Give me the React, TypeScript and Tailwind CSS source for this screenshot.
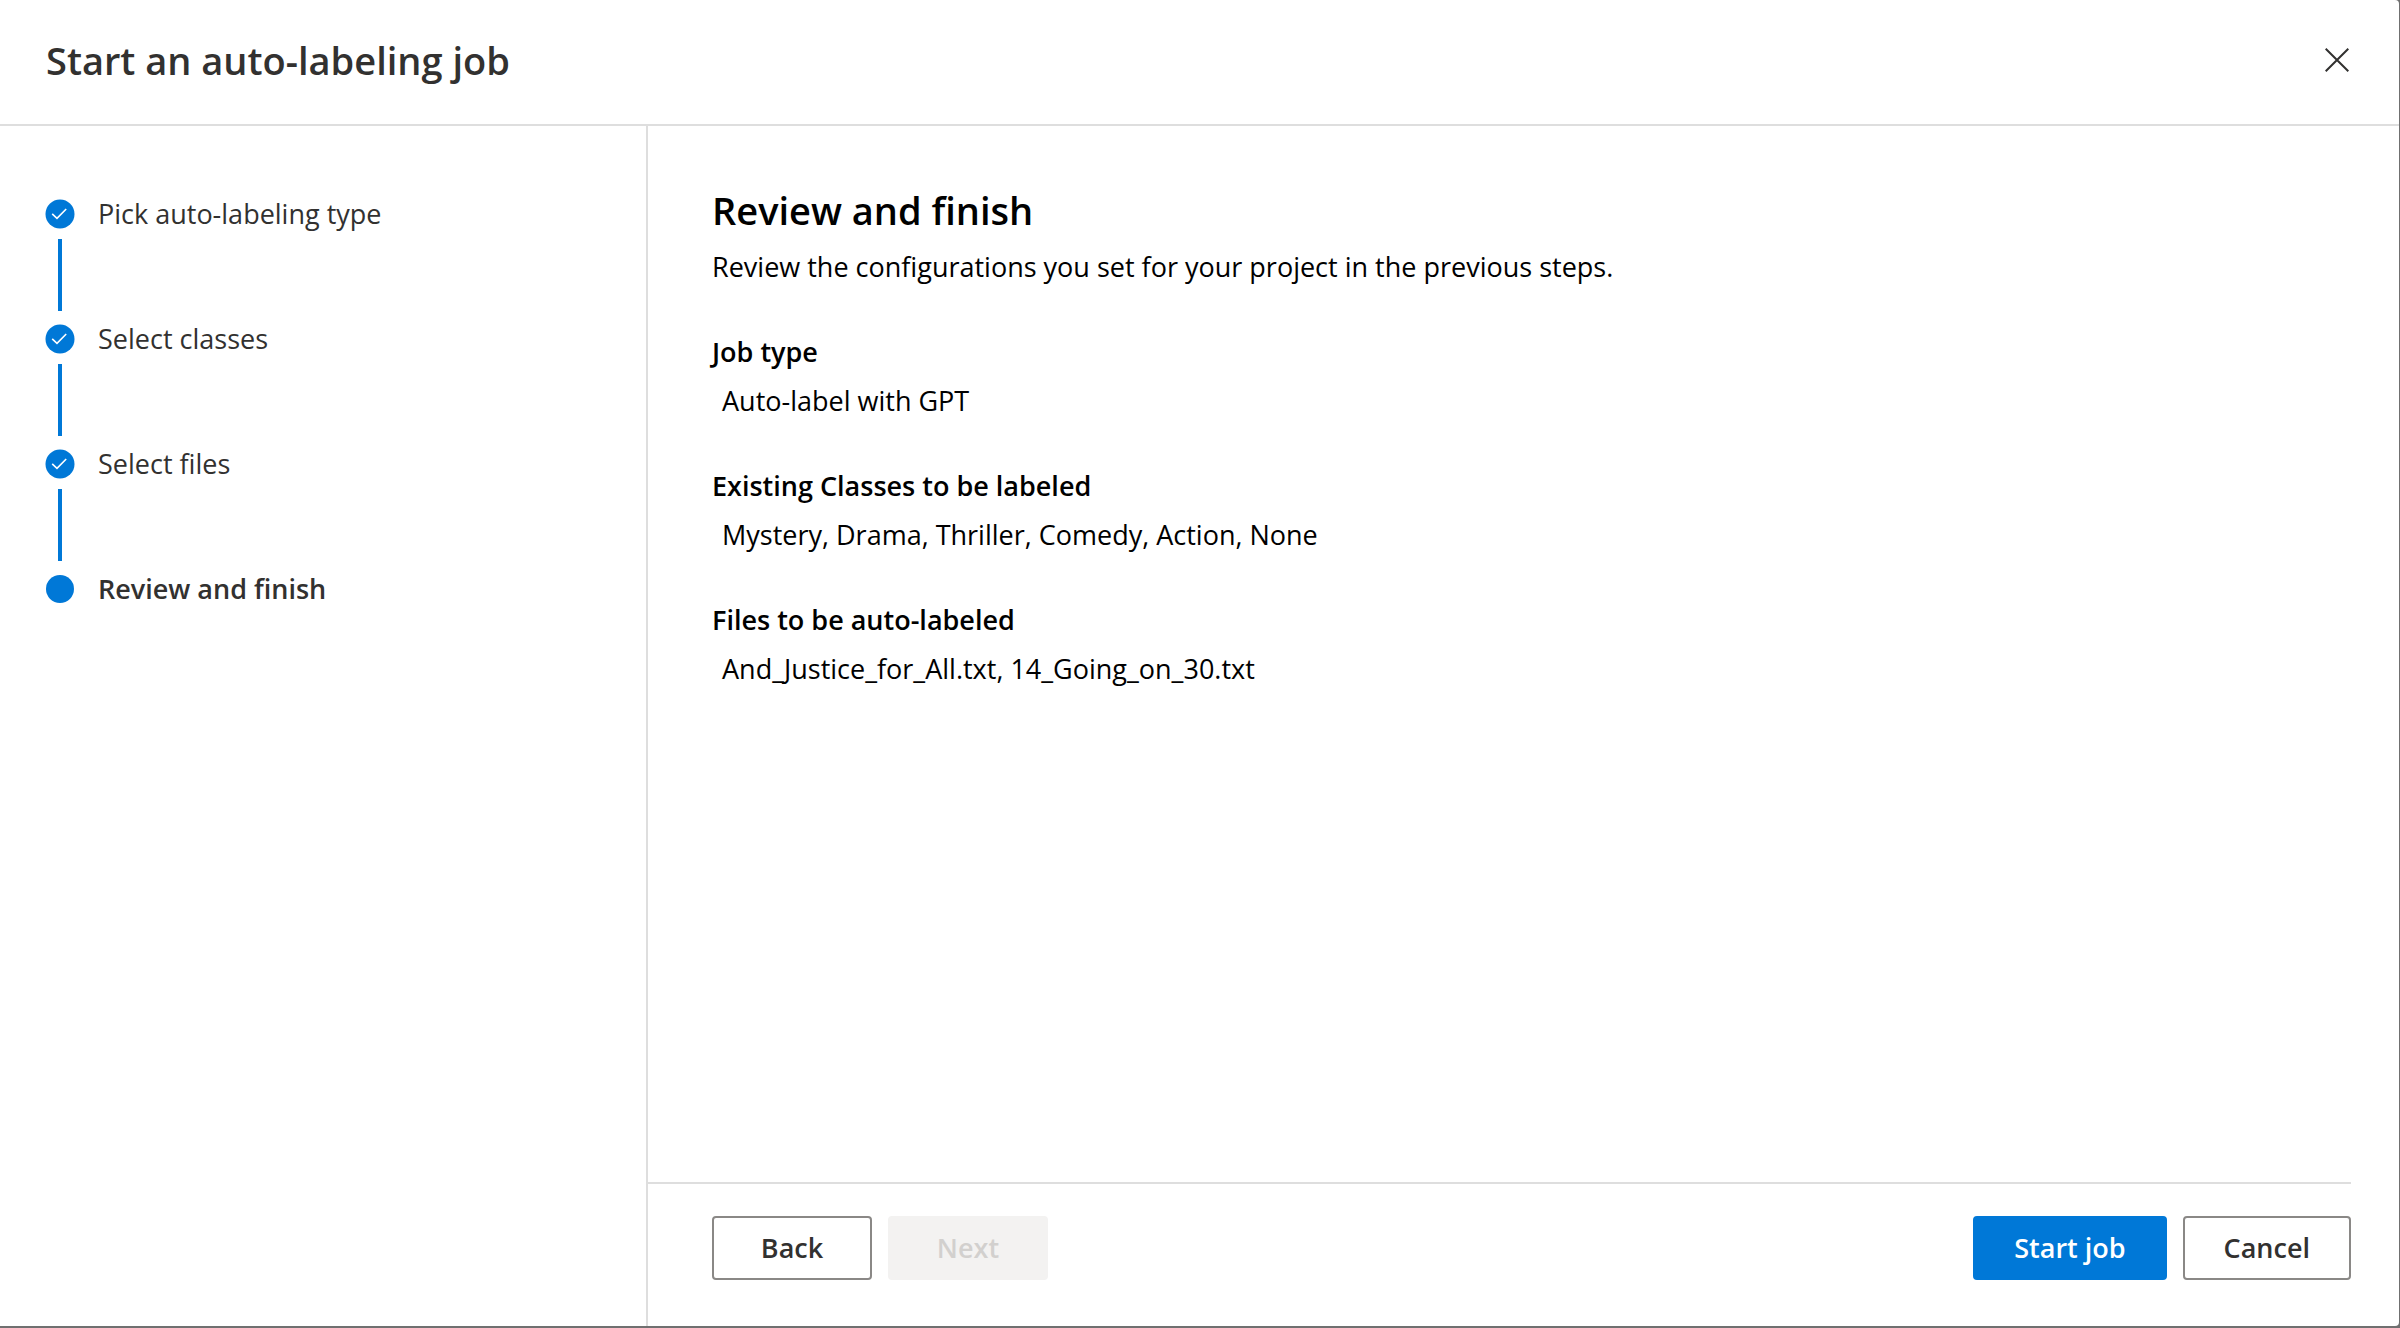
import React from 'react';

const steps = ['Pick auto-labeling type', 'Select classes', 'Select files', 'Review and finish'];

const details = [
  { label: 'Job type', value: 'Auto-label with GPT' },
  { label: 'Existing Classes to be labeled', value: 'Mystery, Drama, Thriller, Comedy, Action, None' },
  { label: 'Files to be auto-labeled', value: 'And_Justice_for_All.txt, 14_Going_on_30.txt' },
];

function DoneMarker() {
  return (
    <svg className="size-[30px]" viewBox="0 0 30 30" fill="none" aria-hidden="true">
      <circle cx="15" cy="15" r="14.5" fill="#0078d7" />
      <path d="M7.2 14.8L12 19.4L21.2 10" stroke="#fff" strokeWidth="1.6" />
    </svg>
  );
}

function Step({ label, current }: { label: string; current: boolean }) {
  return (
    <li className="flex gap-[23px]" aria-current={current ? 'step' : undefined}>
      <div className="flex w-[30px] flex-col items-center">
        <div className="flex size-[30px] items-center justify-center">
          {current ? <span className="size-7 rounded-full bg-[#0078d7]" /> : <DoneMarker />}
        </div>
        {!current && <span className="mt-[10px] mb-[13px] h-[72px] w-1 bg-[#0078d7]" />}
      </div>
      <span className={current ? 'h-[30px] leading-[30px] font-semibold' : 'h-[30px] leading-[30px]'}>{label}</span>
    </li>
  );
}

const buttonBase = 'h-16 min-w-40 rounded-sm border-2 px-[39px] font-semibold';

export default function App() {
  return (
    <div className="flex min-h-screen bg-[#707070] pr-px pb-0.5 font-['Open_Sans',sans-serif] text-[27px] text-[#323130]">
      <div className="flex grow flex-col rounded-r-sm bg-white">
        <header className="flex items-center justify-between border-b-2 border-[#dedede] pt-[30px] pr-11 pb-[34px] pl-[46px]">
          <h1 className="text-[38px] leading-[60px] font-semibold">Start an auto-labeling job</h1>
          <button type="button" aria-label="Close" className="flex size-9 items-center justify-center">
            <svg className="size-6" viewBox="0 0 24 24" fill="none" stroke="#323130" strokeWidth="2" aria-hidden="true">
              <path d="M0.7 0.7L23.3 23.3M23.3 0.7L0.7 23.3" />
            </svg>
          </button>
        </header>
        <div className="flex grow">
          <nav aria-label="Progress" className="w-[648px] shrink-0 border-r-2 border-[#dedede] px-[45px] pt-[73px]">
            <ol>
              {steps.map((label, i) => (
                <Step key={label} label={label} current={i === steps.length - 1} />
              ))}
            </ol>
          </nav>
          <div className="flex grow flex-col pr-12">
            <main className="grow px-16 pt-14 text-black">
              <h2 className="text-[38px] leading-[57px] font-semibold">Review and finish</h2>
              <p className="leading-[56px]">Review the configurations you set for your project in the previous steps.</p>
              <dl className="mt-8 flex flex-col gap-9">
                {details.map((d) => (
                  <div key={d.label}>
                    <dt className="leading-[49px] font-semibold">{d.label}</dt>
                    <dd className="pl-2.5 leading-[49px]">{d.value}</dd>
                  </div>
                ))}
              </dl>
            </main>
            <footer className="flex items-center justify-between border-t-2 border-[#dedede] pt-8 pb-[46px] pl-16">
              <div className="flex gap-4">
                <button type="button" className={`${buttonBase} border-[#8a8886]`}>Back</button>
                <button type="button" disabled className={`${buttonBase} border-[#f3f2f1] bg-[#f3f2f1] text-[#d2d0ce]`}>Next</button>
              </div>
              <div className="flex gap-4">
                <button type="button" className={`${buttonBase} border-[#0078d7] bg-[#0078d7] text-white`}>Start job</button>
                <button type="button" className={`${buttonBase} border-[#8a8886]`}>Cancel</button>
              </div>
            </footer>
          </div>
        </div>
      </div>
    </div>
  );
}
